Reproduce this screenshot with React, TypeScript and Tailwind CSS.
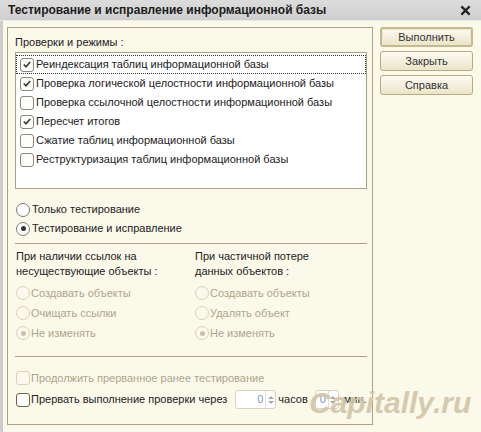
import React from "react";

const font = { fontFamily: '"Liberation Sans", Arial, sans-serif' };

const CheckMark = () => (
  <svg viewBox="0 0 13 13" className="h-[13px] w-[13px]">
    <path d="M3 6.5 L5.4 9 L10 3.8" fill="none" stroke="#3a3a3a" strokeWidth="1.8" />
  </svg>
);

const Checkbox = ({ checked = false, disabled = false, dark = false }: { checked?: boolean; disabled?: boolean; dark?: boolean }) => (
  <span
    className={
      "flex h-[14px] w-[14px] shrink-0 items-center justify-center rounded-[3px] border " +
      (disabled
        ? "border-[#d9d1bb] bg-[#fbf8ec]"
        : dark
        ? "border-[#6f6446] bg-white"
        : "border-[#8c8777] bg-[#fdfdfb]")
    }
  >
    {checked && <CheckMark />}
  </span>
);

const Radio = ({ checked = false, disabled = false }: { checked?: boolean; disabled?: boolean }) => (
  <span
    className={
      "flex h-[14px] w-[14px] shrink-0 items-center justify-center rounded-full border " +
      (disabled ? "border-[#d9d1bb] bg-[#fbf8ec]" : "border-[#7e7b72] bg-white")
    }
  >
    {checked && (
      <span
        className={
          "h-[5px] w-[5px] rounded-full " + (disabled ? "bg-[#c9c2ad]" : "bg-[#333]")
        }
      />
    )}
  </span>
);

const Spinner = ({ width }: { width: string }) => (
  <span
    className={
      "flex h-[19px] items-stretch rounded-[3px] border border-[#d9d2bd] bg-white " + width
    }
  >
    <span className="flex flex-1 items-center justify-end pr-[2px] text-[#7b97c9]">0</span>
    <span className="flex w-[10px] flex-col items-center justify-center gap-[2px] border-l border-[#e3ddcb]">
      <svg viewBox="0 0 6 3" className="h-[3px] w-[6px]">
        <path d="M0 3 L3 0 L6 3Z" fill="#a9a9a9" />
      </svg>
      <svg viewBox="0 0 6 3" className="h-[3px] w-[6px]">
        <path d="M0 0 L3 3 L6 0Z" fill="#a9a9a9" />
      </svg>
    </span>
  </span>
);

const checks = [
  { label: "Реиндексация таблиц информационной базы", checked: true, focused: true },
  { label: "Проверка логической целостности информационной базы", checked: true },
  { label: "Проверка ссылочной целостности информационной базы", checked: false },
  { label: "Пересчет итогов", checked: true },
  { label: "Сжатие таблиц информационной базы", checked: false },
  { label: "Реструктуризация таблиц информационной базы", checked: false },
];

const leftOptions = [
  { label: "Создавать объекты", checked: false },
  { label: "Очищать ссылки", checked: false },
  { label: "Не изменять", checked: true },
];

const rightOptions = [
  { label: "Создавать объекты", checked: false },
  { label: "Удалять объект", checked: false },
  { label: "Не изменять", checked: true },
];

const buttons = ["Выполнить", "Закрыть", "Справка"];

export default function App() {
  return (
    <div
      className="relative h-[432px] w-[481px] overflow-hidden whitespace-nowrap bg-[#fbf9ea] text-[11px] text-[#222]"
      style={font}
    >
      {/* Title bar */}
      <div className="flex h-[21px] items-center justify-between border-b border-[#e8e8e8] bg-gradient-to-b from-[#dcdcdc] to-[#cfcfcf] pl-[8px] pr-[10px]">
        <span className="text-[12px] font-bold text-[#1c1c1c]">
          Тестирование и исправление информационной базы
        </span>
        <svg viewBox="0 0 12 12" className="h-[11px] w-[11px]">
          <path d="M1.5 1.5 L10.5 10.5 M10.5 1.5 L1.5 10.5" stroke="#222" strokeWidth="2.4" />
        </svg>
      </div>

      {/* Body */}
      <div className="flex h-[411px] border-l-[3px] border-[#cdcdcd]">
        {/* Group box */}
        <div className="ml-[4px] mt-[6px] flex h-[398px] w-[366px] flex-col border border-[#aba17f] px-[7px] pt-[7px]">
          <div className="h-[14px] leading-[14px]">Проверки и режимы :</div>

          <div className="mt-[3px] h-[137px] w-[352px] border border-[#aba17f] bg-white pt-[2px]">
            {checks.map((c) => (
              <div
                key={c.label}
                className={
                  "flex h-[19px] items-center gap-[1px] " +
                  (c.focused ? "border border-dotted border-[#333] pl-[3px]" : "pl-[4px]")
                }
              >
                <Checkbox checked={c.checked} />
                <span className="ml-[1px]">{c.label}</span>
              </div>
            ))}
          </div>

          <div className="mt-[11px] flex h-[19px] items-center gap-[2px] pl-[1px]">
            <Radio />
            <span>Только тестирование</span>
          </div>
          <div className="flex h-[19px] items-center gap-[2px] pl-[1px]">
            <Radio checked />
            <span>Тестирование и исправление</span>
          </div>

          <div className="mt-[5px] h-px w-[352px] bg-[#aba17f]" />

          <div className="mt-[5px] flex pl-[1px]">
            <div className="w-[179px]">
              <div className="leading-[15px]">При наличии ссылок на</div>
              <div className="leading-[15px]">несуществующие объекты :</div>
              <div className="mt-[4px]">
                {leftOptions.map((o) => (
                  <div key={o.label} className="flex h-[20px] items-center gap-[1px] text-[#aea58d]">
                    <Radio disabled checked={o.checked} />
                    <span>{o.label}</span>
                  </div>
                ))}
              </div>
            </div>
            <div>
              <div className="leading-[15px]">При частичной потере</div>
              <div className="leading-[15px]">данных объектов :</div>
              <div className="mt-[4px]">
                {rightOptions.map((o) => (
                  <div key={o.label} className="flex h-[20px] items-center gap-[1px] text-[#aea58d]">
                    <Radio disabled checked={o.checked} />
                    <span>{o.label}</span>
                  </div>
                ))}
              </div>
            </div>
          </div>

          <div className="mt-[13px] h-px w-[352px] bg-[#aba17f]" />

          <div className="mt-[11px] flex h-[20px] items-center gap-[1px] pl-[1px] text-[#aea58d]">
            <Checkbox disabled />
            <span>Продолжить прерванное ранее тестирование</span>
          </div>
          <div className="mt-[1px] flex h-[21px] items-center pl-[1px]">
            <Checkbox dark />
            <span className="ml-[1px]">Прервать выполнение проверки через</span>
            <span className="ml-[8px]">
              <Spinner width="w-[41px]" />
            </span>
            <span className="ml-[2px]">часов</span>
            <span className="ml-[7px]">
              <Spinner width="w-[24px]" />
            </span>
            <span className="ml-[5px]">мин.</span>
          </div>
        </div>

        {/* Buttons */}
        <div className="ml-[7px] mt-[6px] flex w-[93px] flex-col gap-[4px]">
          {buttons.map((b, i) => (
            <button
              key={b}
              type="button"
              className={
                "flex h-[20px] items-center justify-center rounded-[3px] bg-gradient-to-b from-[#fdfcf3] to-[#ebe4c9] text-[11px] text-[#333] " +
                (i === 0
                  ? "border-2 border-[#c7b98e] shadow-[inset_0_0_0_1px_#efe7cd]"
                  : "border border-[#b9ab80]")
              }
            >
              {b}
            </button>
          ))}
        </div>
      </div>

      {/* Watermark */}
      <div className="pointer-events-none absolute left-[309px] top-[385px] text-[30px] font-bold italic leading-[36px] text-[#d3c5a8] opacity-90">
        Capitally.ru
      </div>
    </div>
  );
}
